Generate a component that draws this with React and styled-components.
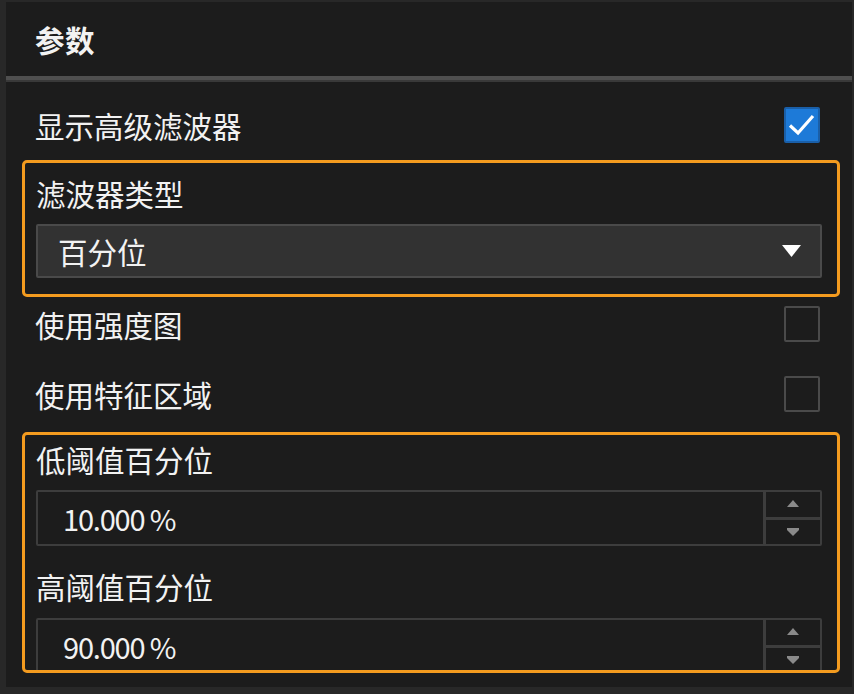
import React from "react";
import styled, { createGlobalStyle } from "styled-components";

const Global = createGlobalStyle`
  html, body { margin: 0; padding: 0; background: #282828; }
  body { width: 854px; height: 694px; overflow: hidden; }
  * { box-sizing: border-box; }
`;

const Frame = styled.div`
  width: 854px;
  height: 694px;
  padding: 2px 2px 7px 6px;
  background: #282828;
  font-family: "Noto Sans CJK SC", "Noto Sans", sans-serif;
  color: #f2f2f2;
`;

const Panel = styled.div`
  width: 846px;
  height: 685px;
  background: #1c1c1c;
  display: flex;
  flex-direction: column;
  overflow: hidden;
`;

const Header = styled.div`
  height: 74px;
  flex: none;
  display: flex;
  align-items: center;
  padding-left: 29px;
  font-size: 29.5px;
  font-weight: 700;
  letter-spacing: 0.5px;
`;

const Separator = styled.div`
  height: 6px;
  flex: none;
  border-top: 4px solid #4f4f4f;
  background: #393939;
`;

const Content = styled.div`
  flex: 1;
  display: flex;
  flex-direction: column;
  padding: 8px 12px 0 16px;
  overflow: hidden;
`;

const CheckRow = styled.div`
  flex: none;
  height: ${(p) => p.$h}px;
  margin-top: ${(p) => p.$mt || 0}px;
  display: flex;
  align-items: center;
  justify-content: space-between;
  padding: 0 20px 0 13px;
`;

const Label = styled.div`
  font-size: 29.5px;
  line-height: 36px;
  height: 36px;
  white-space: nowrap;
  margin-top: ${(p) => p.$mt || 0}px;
`;

const Box = styled.div`
  width: 36px;
  height: 36px;
  border-radius: 2px;
  border: 2px solid ${(p) => (p.$checked ? "#1a5fa8" : "#4a4a4a")};
  background: ${(p) => (p.$checked ? "#1d7ad8" : "transparent")};
  display: flex;
  align-items: center;
  justify-content: center;
`;

const Group = styled.div`
  flex: none;
  height: ${(p) => p.$h}px;
  margin-top: ${(p) => p.$mt || 0}px;
  border: 3px solid #f39b1f;
  border-radius: 5px;
  padding: ${(p) => p.$pt}px 15px 0 11px;
  display: flex;
  flex-direction: column;
  overflow: hidden;
`;

const Select = styled.div`
  flex: none;
  height: 54px;
  margin-top: 13px;
  background: #323232;
  border: 2px solid #4a4a4a;
  border-radius: 2px;
  display: flex;
  align-items: center;
  justify-content: space-between;
  padding: 0 19px 0 20px;
  font-size: 29.5px;
`;

const Spin = styled.div`
  flex: none;
  height: 56px;
  margin-top: ${(p) => p.$mt}px;
  border: 2px solid #3d3d3d;
  border-radius: 2px;
  display: flex;
`;

const SpinValue = styled.div`
  flex: 1;
  display: flex;
  align-items: center;
  padding-left: 25px;
  font-size: 29px;
  letter-spacing: -1.2px;
`;

const SpinButtons = styled.div`
  width: 57px;
  border-left: 3px solid #3d3d3d;
  display: flex;
  flex-direction: column;
`;

const SpinBtn = styled.div`
  flex: 1;
  display: flex;
  align-items: center;
  justify-content: center;
  border-top: ${(p) => (p.$bottom ? "3px solid #3d3d3d" : "none")};
`;

const Check = () => (
  <svg width="28" height="24" viewBox="0 0 28 24">
    <path d="M2 12.5 L10 20 L25 3" fill="none" stroke="#ffffff" strokeWidth="3.2" />
  </svg>
);

const DropArrow = () => (
  <svg width="19" height="12" viewBox="0 0 19 12">
    <path d="M0 0 H19 L9.5 12 Z" fill="#ffffff" />
  </svg>
);

const Tri = ({ up }) => (
  <svg width="12" height="8" viewBox="0 0 12 8">
    <path d={up ? "M6 0 L12 7 H0 Z" : "M0 0 H12 V2 L6 8 L0 2 Z"} fill="#8a8a8a" />
  </svg>
);

const SpinBox = ({ value, mt }) => (
  <Spin $mt={mt}>
    <SpinValue>{value}</SpinValue>
    <SpinButtons>
      <SpinBtn><Tri up /></SpinBtn>
      <SpinBtn $bottom><Tri /></SpinBtn>
    </SpinButtons>
  </Spin>
);

export default function App() {
  return (
    <>
      <Global />
      <Frame>
        <Panel>
          <Header>参数</Header>
          <Separator />
          <Content>
            <CheckRow $h={70}>
              <Label>显示高级滤波器</Label>
              <Box $checked><Check /></Box>
            </CheckRow>
            <Group $h={137} $pt={12}>
              <Label>滤波器类型</Label>
              <Select>
                <span>百分位</span>
                <DropArrow />
              </Select>
            </Group>
            <CheckRow $h={53}>
              <Label>使用强度图</Label>
              <Box />
            </CheckRow>
            <CheckRow $h={77} $mt={5}>
              <Label>使用特征区域</Label>
              <Box />
            </CheckRow>
            <Group $h={241} $pt={6}>
              <Label>低阈值百分位</Label>
              <SpinBox value="10.000 %" mt={13} />
              <Label $mt={22}>高阈值百分位</Label>
              <SpinBox value="90.000 %" mt={14} />
            </Group>
          </Content>
        </Panel>
      </Frame>
    </>
  );
}
